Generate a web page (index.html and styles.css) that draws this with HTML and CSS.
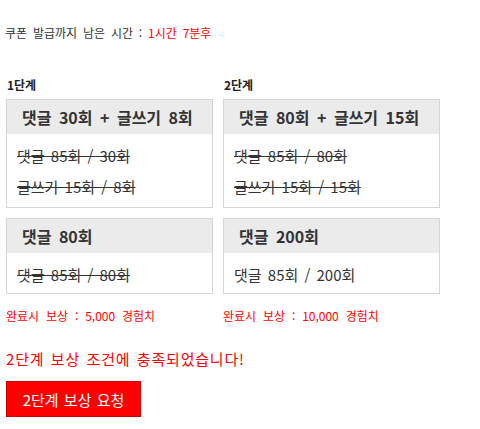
FILE: index.html
```html
<!DOCTYPE html>
<html lang="ko">
<head>
<meta charset="utf-8">
<link rel="stylesheet" href="styles.css">
</head>
<body>
<div class="page">
  <p class="timer">쿠폰 발급까지 남은 시간 : <span class="red">1시간 7분후</span></p>
  <div class="stages">
    <div class="stage stage1">
      <div class="stage-title">1단계</div>
      <div class="box">
        <div class="box-head">댓글 30회 + 글쓰기 8회</div>
        <div class="box-body">
          <div class="line done">댓글 85회 / 30회</div>
          <div class="line done">글쓰기 15회 / 8회</div>
        </div>
      </div>
      <div class="box">
        <div class="box-head">댓글 80회</div>
        <div class="box-body short">
          <div class="line done">댓글 85회 / 80회</div>
        </div>
      </div>
      <div class="reward">완료시 보상 : 5,000 경험치</div>
    </div>
    <div class="stage stage2">
      <div class="stage-title">2단계</div>
      <div class="box">
        <div class="box-head">댓글 80회 + 글쓰기 15회</div>
        <div class="box-body">
          <div class="line done">댓글 85회 / 80회</div>
          <div class="line done">글쓰기 15회 / 15회</div>
        </div>
      </div>
      <div class="box">
        <div class="box-head">댓글 200회</div>
        <div class="box-body short">
          <div class="line">댓글 85회 / 200회</div>
        </div>
      </div>
      <div class="reward">완료시 보상 : 10,000 경험치</div>
    </div>
  </div>
  <p class="notice">2단계 보상 조건에 충족되었습니다!</p>
  <button class="claim">2단계 보상 요청</button>
</div>
</body>
</html>
```

FILE: styles.css
```css
* { box-sizing: border-box; }
body {
  margin: 0;
  background: #fff;
  font-family: "Noto Sans CJK KR", "Noto Sans", sans-serif;
  color: #333;
}
.page {
  padding: 0 0 0 6px;
}
.timer {
  margin: 0;
  padding-top: 24px;
  font-size: 12px;
  line-height: 17px;
  margin-left: -1px;
  word-spacing: 2.5px;
}
.red { color: #f00; }
.stages {
  display: flex;
  gap: 10px;
  margin-top: 35px;
}
.stage1 { width: 207px; }
.stage2 { width: 217px; }
.stage-title {
  font-size: 12px;
  font-weight: bold;
  line-height: 17px;
  margin-left: 1px;
  color: #222;
}
.box {
  border: 1px solid #d6d6d6;
  margin-top: 6px;
}
.box + .box { margin-top: 10px; }
.box-head {
  background: #ebebeb;
  height: 34px;
  line-height: 34px;
  padding-left: 15px;
  font-size: 16px;
  font-weight: bold;
  color: #333;
  word-spacing: 3px;
  white-space: nowrap;
}
.box-body {
  padding: 11px 10px 10px;
  display: flex;
  flex-direction: column;
  gap: 10px;
}
.box-body.short { padding-bottom: 8px; }
.line {
  font-size: 15px;
  line-height: 21px;
  color: #333;
  word-spacing: 2px;
  white-space: nowrap;
}
.line.done { text-decoration: line-through; }
.reward {
  margin-top: 13px;
  font-size: 12px;
  line-height: 17px;
  color: #f00;
  word-spacing: 3.5px;
}
.notice {
  margin: 25px 0 0;
  font-size: 15px;
  line-height: 20px;
  color: #f00;
  letter-spacing: 0.8px;
  word-spacing: 1.5px;
}
.claim {
  display: block;
  margin-top: 12px;
  width: 135px;
  height: 36px;
  background: #f00;
  border: 1px solid #c00;
  color: #fff;
  font-family: inherit;
  font-size: 15px;
  word-spacing: 1px;
  padding: 0;
}
```
